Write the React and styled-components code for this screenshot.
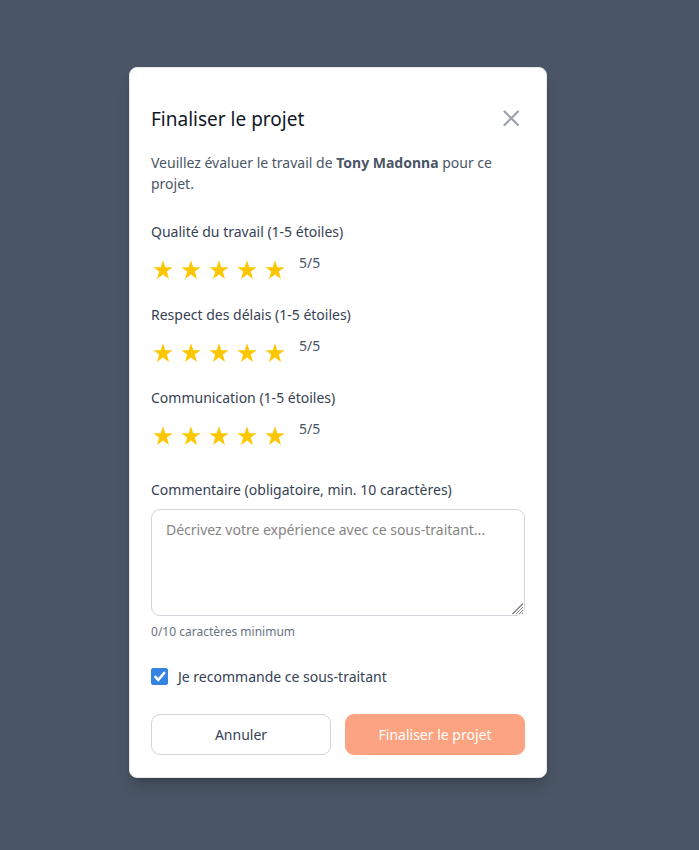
import React, { useState } from "react";
import styled, { createGlobalStyle } from "styled-components";

const GlobalStyle = createGlobalStyle`
  *, *::before, *::after { box-sizing: border-box; }
  body {
    margin: 0;
    background: #4a5565;
    font-family: "Noto Sans", sans-serif;
    font-size: 14px;
    line-height: 21px;
    color: #364153;
  }
  button, textarea, input { font: inherit; color: inherit; }
  h2, p, fieldset { margin: 0; }
`;

const Overlay = styled.div`
  display: flex;
  justify-content: center;
  align-items: flex-start;
  min-height: 100vh;
  padding: 67px 23px 72px 0;
  background: #4a5565;
`;

const Dialog = styled.form`
  width: 100%;
  max-width: 418px;
  padding: 37px 21px 22px;
  border: 1px solid #e5e7eb;
  border-radius: 8px;
  background: #fff;
  box-shadow: 0 10px 15px -3px rgba(0, 0, 0, 0.18), 0 4px 6px -4px rgba(0, 0, 0, 0.18);
`;

const Header = styled.div`
  display: flex;
  align-items: center;
  justify-content: space-between;
  margin-bottom: 19px;
`;

const Title = styled.h2`
  font-size: 19px;
  line-height: 28px;
  font-weight: 400;
  color: #101828;
`;

const CloseButton = styled.button`
  display: flex;
  padding: 0 3px 0 0;
  border: 0;
  background: none;
  color: #99a1af;
  cursor: pointer;
`;

const Intro = styled.p`
  margin-bottom: 27px;
  color: #4a5565;

  strong { font-weight: 700; }
`;

const Ratings = styled.div`
  display: grid;
  gap: 21px;
  margin-bottom: 30px;
`;

const RatingGroup = styled.fieldset`
  min-width: 0;
  padding: 0;
  border: 0;
`;

const Legend = styled.legend`
  padding: 0;
  margin-bottom: 10px;
`;

const RatingRow = styled.div`
  display: flex;
  height: 31px;
`;

const StarButton = styled.button`
  display: flex;
  align-items: center;
  width: 28px;
  padding: 4px 2px 0;
  border: 0;
  background: none;
  color: ${({ $filled }) => ($filled ? "#fdc700" : "#d1d5dc")};
  cursor: pointer;
`;

const Score = styled.span`
  margin-left: 8px;
  color: #4a5565;
`;

const Label = styled.label`
  display: block;
  margin-bottom: 9px;
`;

const Comment = styled.textarea`
  display: block;
  width: 100%;
  height: 107px;
  padding: 9px 14px;
  border: 1px solid #d1d5dc;
  border-radius: 9px;
  background: #fff;
  resize: vertical;

  &::placeholder { color: #858585; opacity: 1; }

  &::-webkit-resizer {
    background: linear-gradient(
        135deg,
        transparent 50%,
        #888 50% 56%,
        transparent 56% 64%,
        #888 64% 70%,
        transparent 70% 78%,
        #888 78% 84%,
        transparent 84% 91%,
        #888 91%
      )
      right 1px bottom 1px / 11px 11px no-repeat;
  }
`;

const Hint = styled.p`
  margin: 7px 0 25px;
  font-size: 12px;
  line-height: 18px;
  color: #6a7282;
`;

const CheckLabel = styled.label`
  display: flex;
  align-items: center;
  gap: 10px;
  margin-bottom: 27px;
`;

const Checkbox = styled.input`
  appearance: none;
  width: 17px;
  height: 17px;
  margin: 0;
  border: 1px solid #99a1af;
  border-radius: 2px;

  &:checked {
    border-color: #3584e4;
    background: #3584e4;
  }
`;

const CheckBoxArea = styled.span`
  display: grid;

  > * { grid-area: 1 / 1; }
  > svg { pointer-events: none; }
`;

const Actions = styled.div`
  display: grid;
  grid-template-columns: 1fr 1fr;
  gap: 14px;
`;

const Button = styled.button`
  height: 41px;
  padding: 0 14px;
  border: 1px solid ${({ $primary }) => ($primary ? "#fca481" : "#d1d5dc")};
  border-radius: 9px;
  background: ${({ $primary }) => ($primary ? "#fca481" : "#fff")};
  color: ${({ $primary }) => ($primary ? "#fff" : "#364153")};
`;

function Rating({ label }) {
  const [value, setValue] = useState(5);
  return (
    <RatingGroup>
      <Legend>{label}</Legend>
      <RatingRow>
        {[1, 2, 3, 4, 5].map((n) => (
          <StarButton
            key={n}
            type="button"
            aria-label={`${n} sur 5`}
            $filled={n <= value}
            onClick={() => setValue(n)}
          >
            <svg width="20" height="20" viewBox="0 0 20 20" fill="currentColor" aria-hidden="true">
              <path d="M10 0.3 12.3 7.2H19.7L13.8 11.6 16 18.9 10 14.6 4 18.9 6.2 11.6 0.3 7.2H7.7Z" />
            </svg>
          </StarButton>
        ))}
        <Score>{value}/5</Score>
      </RatingRow>
    </RatingGroup>
  );
}

export default function App() {
  const [comment, setComment] = useState("");
  const [recommended, setRecommended] = useState(true);

  return (
    <>
      <GlobalStyle />
      <Overlay>
        <Dialog role="dialog" aria-labelledby="title" onSubmit={(e) => e.preventDefault()}>
          <Header>
            <Title id="title">Finaliser le projet</Title>
            <CloseButton type="button" aria-label="Fermer">
              <svg width="22" height="22" viewBox="0 0 22 22" fill="none" stroke="currentColor" strokeWidth="2.2" strokeLinecap="round" aria-hidden="true">
                <path d="M4.5 3.5 18 17M18 3.5 4.5 17" />
              </svg>
            </CloseButton>
          </Header>
          <Intro>
            Veuillez évaluer le travail de <strong>Tony Madonna</strong> pour ce projet.
          </Intro>
          <Ratings>
            <Rating label="Qualité du travail (1-5 étoiles)" />
            <Rating label="Respect des délais (1-5 étoiles)" />
            <Rating label="Communication (1-5 étoiles)" />
          </Ratings>
          <Label htmlFor="comment">Commentaire (obligatoire, min. 10 caractères)</Label>
          <Comment
            id="comment"
            placeholder="Décrivez votre expérience avec ce sous-traitant..."
            value={comment}
            onChange={(e) => setComment(e.target.value)}
          />
          <Hint>{comment.length}/10 caractères minimum</Hint>
          <CheckLabel>
            <CheckBoxArea>
              <Checkbox type="checkbox" checked={recommended} onChange={(e) => setRecommended(e.target.checked)} />
              {recommended && (
                <svg width="17" height="17" viewBox="0 0 17 17" fill="none" stroke="#fff" strokeWidth="2.6" strokeLinecap="round" aria-hidden="true">
                  <path d="M4.5 9 7.3 11.8 13.2 5" />
                </svg>
              )}
            </CheckBoxArea>
            Je recommande ce sous-traitant
          </CheckLabel>
          <Actions>
            <Button type="button">Annuler</Button>
            <Button type="submit" $primary disabled={comment.length < 10}>
              Finaliser le projet
            </Button>
          </Actions>
        </Dialog>
      </Overlay>
    </>
  );
}
